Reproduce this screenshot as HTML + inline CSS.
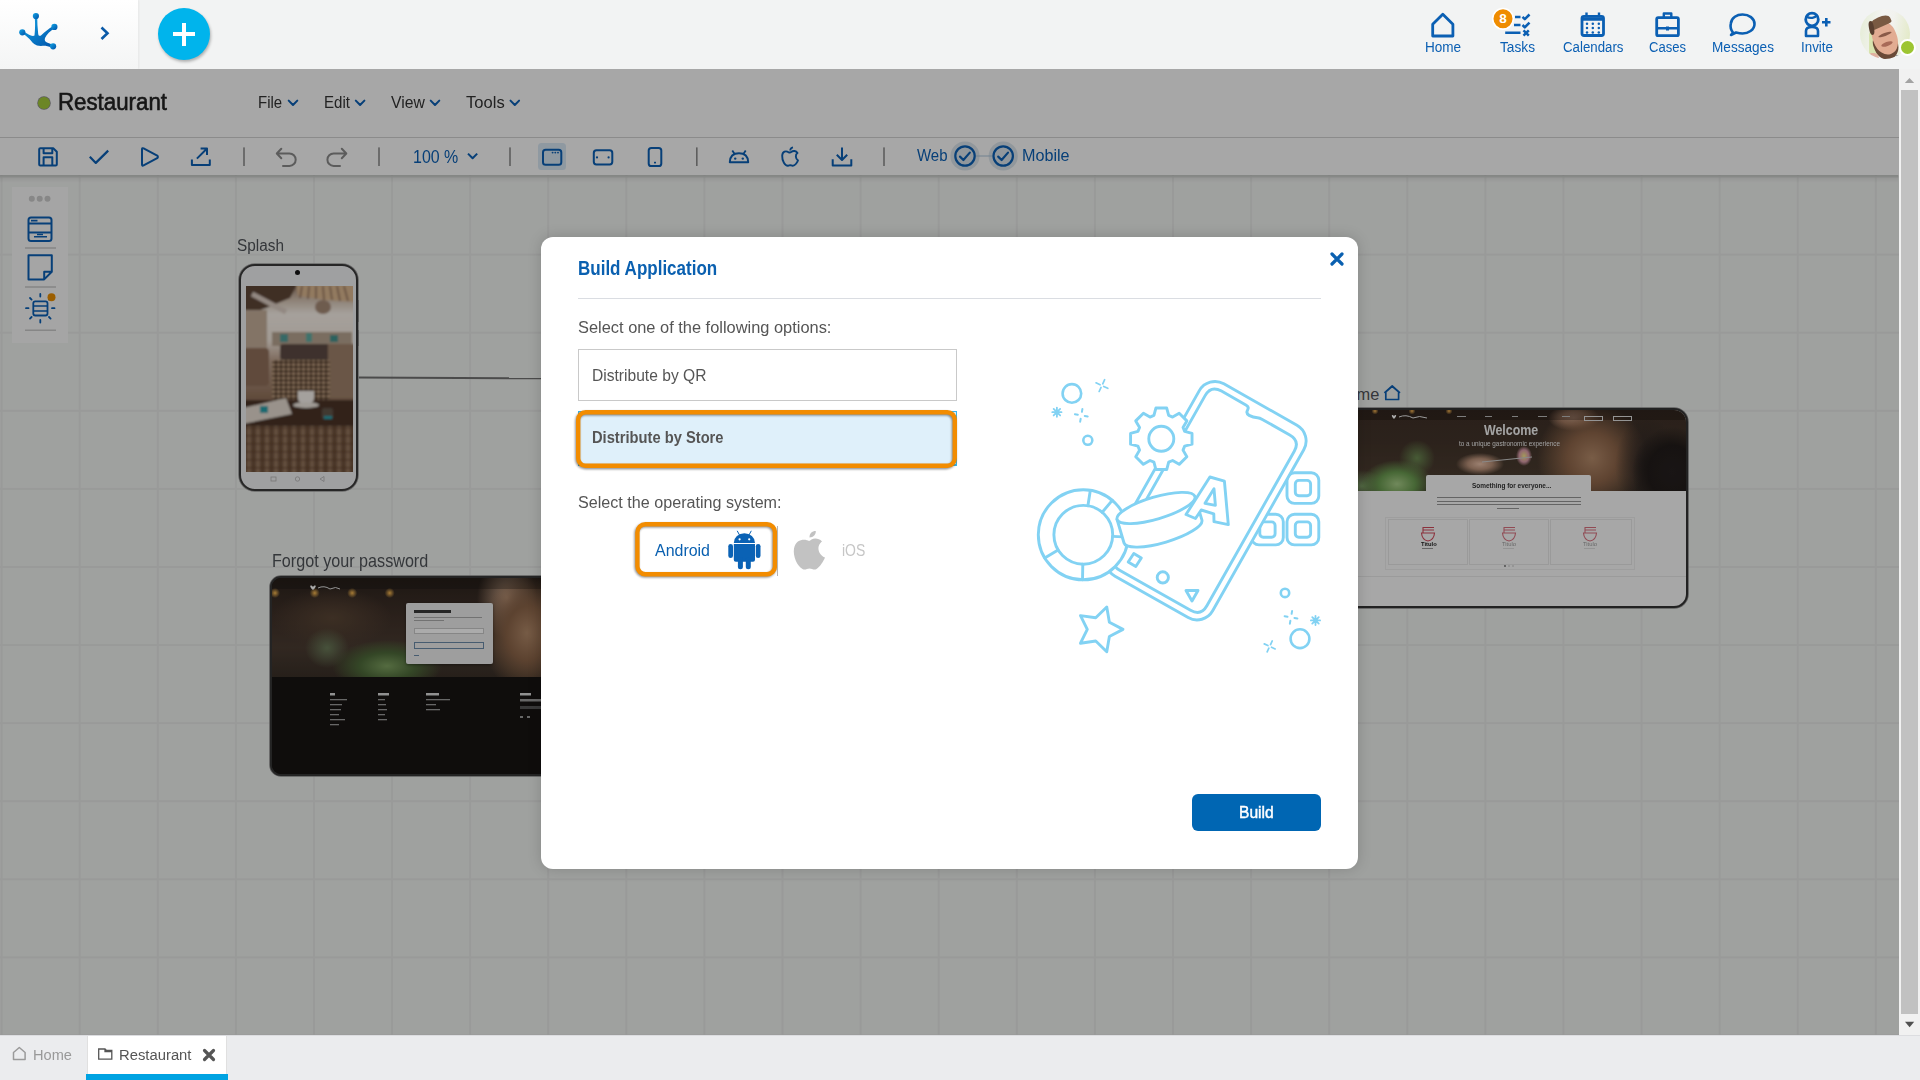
<!DOCTYPE html>
<html><head><meta charset="utf-8"><title>Build Application</title>
<style>
*{box-sizing:border-box}
html,body{margin:0;padding:0}
body{width:1920px;height:1080px;overflow:hidden;position:relative;background:#f2f3f3;font-family:"Liberation Sans",sans-serif;color:#333}
.t{position:absolute;white-space:nowrap;line-height:1}
.a{position:absolute}
svg{position:absolute;overflow:visible}
#hdr{position:absolute;left:0;top:0;width:1920px;height:69px;background:#f2f3f3}
#logo{position:absolute;left:0;top:0;width:138px;height:69px;background:linear-gradient(#ffffff,#f4f5f5);box-shadow:1px 0 2px rgba(0,0,0,0.05)}
#plus{position:absolute;left:158px;top:8px;width:52px;height:52px;border-radius:50%;background:#00b4ec;box-shadow:1px 2px 3px rgba(0,0,0,0.28)}
#main{position:absolute;left:0;top:69px;width:1899px;height:966px;background:#f2f3f2;overflow:hidden;z-index:0}
#tbar{position:absolute;left:0;top:0;width:1899px;height:69px;background:#f9f9f9;border-bottom:1px solid #d0d0d0}
#tools{position:absolute;left:0;top:69px;width:1899px;height:37px;background:#f9f9f9;}
#canvas{position:absolute;left:0;top:106px;width:1899px;height:860px;background-color:#eef0ee;
 background-image:linear-gradient(to right,#e4e6e4 2px,transparent 2px),linear-gradient(to bottom,#e4e6e4 2px,transparent 2px);
 background-size:78.1px 78.1px;background-position:0.6px 0.5px}
#overlay{position:absolute;left:0;top:69px;width:1899px;height:966px;background:rgba(0,0,0,0.33)}
#modal{position:absolute;left:541px;top:237px;width:817px;height:632px;background:#fff;border-radius:12px;box-shadow:0 0 14px rgba(0,0,0,0.17)}
#sb{position:absolute;left:1899px;top:69px;width:21px;height:966px;background:#f1f1f1}
#tabs{position:absolute;left:0;top:1035px;width:1920px;height:45px;background:#ebecee;border-top:1px solid #dcdde0}
</style></head>
<body>
<div id="hdr"><div id="logo"></div><div id="plus"></div></div>
<svg style="left:0px;top:0px" width="138" height="69" viewBox="0 0 138 69" >
<defs><linearGradient id="lg" x1="0" y1="0" x2="1" y2="1"><stop offset="0" stop-color="#12a6e6"/><stop offset="1" stop-color="#0050a8"/></linearGradient></defs>
<g fill="url(#lg)" stroke="none">
<path d="M34.6 16.5 C35.5 24 35 31 34.5 35.5 C33 36.5 30 35.5 27 33.5 C25.5 32.5 24 32 22.8 31 L21.8 33.6 C24 34.5 27 36.5 29.5 39 C31.5 41.5 33.5 44 37 45.5 C40.5 46.5 44 45.5 46.5 46 C48.5 46.3 50.5 47 52.2 47.8 L53.6 45 C51.5 44.2 49 43.5 47 42.5 C45 41.5 44.3 40 45 38 C46.5 34.5 50 31 55.4 28 L53.6 25.9 C48.5 28.5 44.5 32 41.5 35 C40 36.5 38.5 36 38.2 34 C37.5 28 37.2 22 37.2 16.3 Z"/>
<circle cx="35.9" cy="16" r="3.1"/>
<circle cx="22.3" cy="32.3" r="3.1"/>
<circle cx="54.4" cy="26.9" r="3.1"/>
<circle cx="53.1" cy="46.3" r="3.1"/>
</g>
<path d="M101.5 27.5 L107.5 33.2 L101.5 39" fill="none" stroke="#0b5aa8" stroke-width="2.6"/>
</svg>
<div class="a" style="left:173px;top:31.8px;width:22px;height:4.4px;background:#fff"></div>
<div class="a" style="left:181.8px;top:22.5px;width:4.4px;height:23.5px;background:#fff"></div>
<svg style="left:1400px;top:0px" width="440" height="69" viewBox="1400 0 440 69" >
<g fill="none" stroke="#0b5fb3" stroke-width="2.8" stroke-linejoin="round">
<path d="M1432.7 36 V24.2 L1442.8 14.2 L1452.9 24.2 V36 Z"/>
<path d="M1515 16.9 H1520.5 M1522.5 16.9 L1524.8 19.2 L1529.5 14.5 M1514 25 H1520.5 M1522.5 25 L1524.8 27.3 L1529.5 22.6 M1505.2 32.8 H1520.5 M1523.5 30.3 L1528.8 35.6 M1528.8 30.3 L1523.5 35.6" stroke-width="2.5" stroke-linecap="butt"/>
<rect x="1582" y="16.3" width="21.5" height="19.2" rx="2"/>
<path d="M1582 19 H1603.5" stroke-width="3.5"/>
<path d="M1586.5 12.5 V17 M1599 12.5 V17" stroke-width="2.4"/>
<rect x="1656.7" y="17.7" width="21.7" height="18" rx="1.5"/>
<path d="M1663.8 17.5 V13.5 H1671.3 V17.5 M1656.7 28.3 H1678.4" stroke-width="2.4"/>
<path d="M1733 32.5 C1730 29 1730.5 25 1730.8 23.5 C1731.5 17.5 1737 14.5 1742.5 14.5 C1749 14.5 1754.5 18.3 1754.5 24 C1754.5 30 1748 33.5 1742.5 33.5 C1740 33.5 1738 33 1736 32.5 L1731 35 Z" stroke-width="2.6"/>
<circle cx="1812" cy="19.5" r="6.3" stroke-width="2.8"/>
<path d="M1806.5 16.5 C1810 19 1815 18 1817.5 15" stroke-width="2.2"/>
<path d="M1806 36 V31 C1806 28 1808.5 27 1812 27 C1815.5 27 1818 28 1818 31 V36 Z" stroke-width="2.6"/>
<path d="M1826.3 18 V26.5 M1822 22.3 H1830.5" stroke-width="2.6"/>
</g>
<g fill="#0b5fb3">
<circle cx="1587" cy="23.8" r="1.25"/><circle cx="1592.8" cy="23.8" r="1.25"/><circle cx="1598.8" cy="23.8" r="1.25"/>
<circle cx="1587" cy="28.1" r="1.25"/><circle cx="1592.8" cy="28.1" r="1.25"/><circle cx="1598.8" cy="28.1" r="1.25"/>
<circle cx="1587" cy="32.5" r="1.25"/><circle cx="1592.8" cy="32.5" r="1.25"/><circle cx="1598.8" cy="32.5" r="1.25"/>
<rect x="1666" y="26.5" width="3" height="4"/>
</g>
<circle cx="1503" cy="18.8" r="10.3" fill="#ef8c00" stroke="#ffffff" stroke-width="1.6"/>
</svg>
<div class="t" style="left:1499.20px;top:11.81px;font-size:13.52px;color:#fff;font-weight:bold;">8</div>
<div class="t" style="left:1424.80px;top:39.52px;font-size:14.68px;transform:scaleX(0.9236);transform-origin:0 0;color:#0b5fb3;">Home</div>
<div class="t" style="left:1500.00px;top:39.52px;font-size:14.68px;transform:scaleX(0.9331);transform-origin:0 0;color:#0b5fb3;">Tasks</div>
<div class="t" style="left:1562.50px;top:39.52px;font-size:14.68px;transform:scaleX(0.9038);transform-origin:0 0;color:#0b5fb3;">Calendars</div>
<div class="t" style="left:1649.30px;top:39.52px;font-size:14.68px;transform:scaleX(0.8890);transform-origin:0 0;color:#0b5fb3;">Cases</div>
<div class="t" style="left:1711.50px;top:39.52px;font-size:14.68px;transform:scaleX(0.9262);transform-origin:0 0;color:#0b5fb3;">Messages</div>
<div class="t" style="left:1801.00px;top:39.52px;font-size:14.68px;transform:scaleX(0.9121);transform-origin:0 0;color:#0b5fb3;">Invite</div>
<div class="a" style="left:1860px;top:9px;width:50px;height:50px;border-radius:50%;overflow:hidden;background:linear-gradient(100deg,#e4ecd4 0%,#f4f4f2 40%,#f2f2ee 60%,#e0e8c0 100%)">
<div class="a" style="left:0;top:0;width:50px;height:50px;filter:blur(0.6px)">
<div class="a" style="left:9px;top:22px;width:10px;height:26px;background:#d8e4b0;border-radius:4px"></div>
<div class="a" style="left:14px;top:22px;width:24px;height:29px;border-radius:40% 40% 50% 50%;background:#6a4a38;transform:rotate(-22deg)"></div>
<div class="a" style="left:13px;top:12px;width:24px;height:34px;border-radius:45% 45% 48% 48%;background:#e2ac92;transform:rotate(-22deg)"></div>
<div class="a" style="left:9px;top:8px;width:22px;height:10px;border-radius:60% 60% 20% 20%;background:#7a5a42;transform:rotate(-24deg)"></div><div class="a" style="left:9px;top:12px;width:5px;height:14px;border-radius:40%;background:#5a4030;transform:rotate(-10deg)"></div>
<div class="a" style="left:21px;top:33px;width:12px;height:4px;border-radius:50%;background:#a86a58;transform:rotate(-20deg)"></div><div class="a" style="left:18px;top:24px;width:14px;height:3px;border-radius:50%;background:#8a5a48;transform:rotate(-20deg)"></div>
<div class="a" style="left:7px;top:44px;width:12px;height:14px;border-radius:40%;background:#e0b0a0"></div>
<div class="a" style="left:20px;top:50px;width:26px;height:10px;background:#ece8e6"></div>
<div class="a" style="left:36px;top:46px;width:8px;height:8px;background:#9a9aa0"></div>
</div></div>
<div class="a" style="left:1898.5px;top:39.3px;width:17px;height:17px;border-radius:50%;background:#9dc532;border:2.6px solid #fff"></div>
<div id="main"><div id="tbar"></div><div id="tools"></div><div id="canvas"></div><div class="a" style="left:0;top:106px;width:1898px;height:8px;background:linear-gradient(rgba(0,0,0,0.16),rgba(0,0,0,0.05) 45%,rgba(0,0,0,0))"></div></div>
<div class="a" style="left:38.2px;top:97px;width:11.6px;height:11.6px;border-radius:50%;background:#a2c83a;box-shadow:0 0 0 0.7px #8a8a8a"></div>
<div class="t" style="left:58.00px;top:89.81px;font-size:23.98px;transform:scaleX(0.9294);transform-origin:0 0;color:#222;-webkit-text-stroke:0.6px #222;">Restaurant</div>
<div class="t" style="left:258.00px;top:94.32px;font-size:17.15px;transform:scaleX(0.8728);transform-origin:0 0;color:#333;">File</div>
<div class="t" style="left:323.60px;top:94.32px;font-size:17.15px;transform:scaleX(0.8788);transform-origin:0 0;color:#333;">Edit</div>
<div class="t" style="left:390.70px;top:94.32px;font-size:17.15px;transform:scaleX(0.9193);transform-origin:0 0;color:#333;">View</div>
<div class="t" style="left:465.80px;top:94.32px;font-size:17.15px;transform:scaleX(0.9663);transform-origin:0 0;color:#333;">Tools</div>
<svg style="left:0px;top:69px" width="1898" height="110" viewBox="0 69 1898 110" ><g fill="none" stroke="#0b5fb3" stroke-width="2" stroke-linecap="round" stroke-linejoin="round"><path d="M288.7 100.6 L293 105 L297.3 100.6"/><path d="M355.8 100.6 L360.1 105 L364.40000000000003 100.6"/><path d="M430.7 100.6 L435 105 L439.3 100.6"/><path d="M510.49999999999994 100.6 L514.8 105 L519.0999999999999 100.6"/></g><g fill="none" stroke="#0b5fb3" stroke-width="2" stroke-linejoin="round">
<path d="M39.2 149.3 Q39.2 148.2 40.3 148.2 H53.2 L56.8 151.8 V164.5 Q56.8 165.6 55.7 165.6 H40.3 Q39.2 165.6 39.2 164.5 Z"/>
<path d="M43.6 148.4 V153.3 H52.3 V148.4 M43.6 165.4 V157.2 H52.3 V165.4"/>
<path d="M89.8 156.8 L95.8 162.9 L108.2 150.6" stroke-width="2.2"/>
<path d="M142 149.2 Q142 147.6 143.6 148.4 L157.2 155.6 Q158.6 156.9 157.2 158.2 L143.6 165.4 Q142 166.2 142 164.6 Z"/>
<path d="M191.9 159.6 V164.9 H209.8 V159.6 M196.9 158.6 L206.8 148.7 M200.6 148.6 H207 V155"/>
<path d="M468 153.6 L472.6 158.2 L477.2 153.6"/>
<rect x="538" y="143" width="28" height="27" rx="3.5" fill="#d6e5f1" stroke="none"/>
<rect x="543" y="149.8" width="18.3" height="15" rx="2.6"/>
<rect x="593.8" y="150.3" width="18.5" height="14.1" rx="2.6"/>
<rect x="648.7" y="148" width="12.6" height="18" rx="2.6"/>
<path d="M729.8 162.3 Q730 153.3 739 153.3 Q748 153.3 748.2 162.3 Z"/>
<path d="M732.3 150.6 L734.6 154 M745.7 150.6 L743.4 154" stroke-width="1.8"/>
<path d="M788.5 152.2 C786 150.5 782.4 151.3 782.2 155.8 C782 161 785 166 788 165.8 C789 165.6 789.6 165.2 790.3 165.2 C791 165.2 791.6 165.7 792.6 165.8 C795 166 797.6 162 798 160.3 C795.5 159 795 154.5 797.5 153 C796 150.7 793.2 150.5 791.5 151.8 C790.5 152.6 789.5 152.8 788.5 152.2 Z" stroke-width="1.9"/>
<path d="M790.2 150.5 C790.3 148.8 791.5 147.6 793 147.4" stroke-width="1.8"/>
<path d="M842 147.6 V160 M836.8 154.8 L842 160 L847.2 154.8 M832.7 159.3 V165.6 H851.3 V159.3"/>
</g>
<g fill="#0b5fb3">
<circle cx="552.6" cy="152.6" r="0.95"/><circle cx="555.3" cy="152.6" r="0.95"/><circle cx="558" cy="152.6" r="0.95"/>
<circle cx="597" cy="157.4" r="1.1"/><circle cx="608.6" cy="157.4" r="1.1"/>
<rect x="654" y="161.8" width="2" height="1.6"/>
<circle cx="735.2" cy="158.6" r="1.2"/><circle cx="742.8" cy="158.6" r="1.2"/>
</g>
<g fill="#8c8c8c">
<rect x="243.2" y="147.4" width="1.6" height="18.6"/><rect x="378.2" y="147.4" width="1.6" height="18.6"/>
<rect x="509.2" y="147.4" width="1.6" height="18.6"/><rect x="696" y="147.4" width="1.6" height="18.6"/><rect x="883.2" y="147.4" width="1.6" height="18.6"/>
</g>
<g fill="none" stroke="#8a8a8a" stroke-width="2" stroke-linecap="round" stroke-linejoin="round">
<path d="M281.3 148.8 L276.8 153.5 L281.3 158.2 M277.3 153.5 H289.5 A6.2 6.2 0 0 1 289.5 165.9 H283"/>
<path d="M341.8 148.8 L346.3 153.5 L341.8 158.2 M345.8 153.5 H333.6 A6.2 6.2 0 0 0 333.6 165.9 H340"/>
</g>
<circle cx="965" cy="156" r="14.6" fill="#d8e2e9"/><circle cx="1003.2" cy="156" r="14.6" fill="#d8e2e9"/>
<path d="M975.5 156 H992.7" stroke="#a9c2d8" stroke-width="1"/>
<g fill="none" stroke="#0b5fb3" stroke-width="2.2" stroke-linecap="round" stroke-linejoin="round">
<circle cx="965" cy="156" r="9.7"/><circle cx="1003.2" cy="156" r="9.7"/>
<path d="M960 156.6 L963.4 160 L969.8 152.6 M998.2 156.6 L1001.6 160 L1008 152.6"/>
</g>
</svg>
<div class="t" style="left:412.50px;top:147.98px;font-size:18.02px;transform:scaleX(0.8866);transform-origin:0 0;color:#0b5fb3;">100 %</div>
<div class="t" style="left:916.60px;top:147.10px;font-size:17.30px;transform:scaleX(0.8672);transform-origin:0 0;color:#0b5fb3;">Web</div>
<div class="t" style="left:1021.60px;top:147.10px;font-size:17.30px;transform:scaleX(0.9345);transform-origin:0 0;color:#0b5fb3;">Mobile</div>
<div class="a" style="left:12px;top:187px;width:55.5px;height:155.5px;background:#f7f7f7"></div>
<svg style="left:0px;top:180px" width="80" height="170" viewBox="0 180 80 170" ><g fill="#c9c9c9"><circle cx="31.8" cy="198.8" r="3"/><circle cx="39.7" cy="198.8" r="3"/><circle cx="47.5" cy="198.8" r="3"/></g>
<g fill="none" stroke="#c8c8c8" stroke-width="1.5"><path d="M25 248 H56 M25 287 H56 M25 330.3 H56"/></g>
<g fill="none" stroke="#0b5fb3" stroke-width="2" stroke-linejoin="round">
<rect x="28.5" y="217.6" width="23" height="23.3" rx="2.5"/>
<path d="M28.5 223.5 H51.5 M28.5 232.5 H51.5"/>
<path d="M31 220.6 H37.5 M34 236.8 H47 M37 234.5 H43" stroke-width="1.6"/>
<path d="M28.5 255.2 H51.8 V271.8 L44.2 279.4 H28.5 Z M51.8 271.8 H44.2 V279.4"/>
<rect x="33.3" y="301.3" width="14.2" height="14.2" rx="2" stroke-width="1.8"/>
<path d="M33.3 306 H47.5 M33.3 311 H47.5" stroke-width="1.5"/>
<path d="M40.3 294 V296.5 M40.3 320 V322.5 M26 308.2 H28.5 M52 308.2 H54.5 M30 298 L31.6 299.6 M49 317 L50.6 318.6 M30 318.6 L31.6 317 M49 299.6 L50.6 298" stroke-width="1.8" stroke-linecap="round"/>
</g>
<circle cx="51.5" cy="297.2" r="4" fill="#e88c00"/>
</svg>
<div class="t" style="left:237.40px;top:236.50px;font-size:17.30px;transform:scaleX(0.8880);transform-origin:0 0;color:#4e5257;">Splash</div>
<svg style="left:300px;top:360px" width="260" height="30" viewBox="300 360 260 30" ><path d="M358.5 377.4 L541 378.3" stroke="#707070" stroke-width="2" fill="none"/></svg>
<div class="a" style="left:238.7px;top:263.8px;width:119px;height:227.4px;border-radius:16px;border:2.6px solid #3a3a3a;background:#eeeff1;box-shadow:0 0 0 0.8px #9a9a9a"></div>
<div class="a" style="left:357.6px;top:300px;width:1.6px;height:22px;background:#8a8a8a"></div>
<div class="a" style="left:357.6px;top:330px;width:1.6px;height:16px;background:#8a8a8a"></div>
<div class="a" style="left:295px;top:269.5px;width:5px;height:5px;border-radius:50%;background:#151515"></div>
<div class="a" style="left:246px;top:285.5px;width:106.5px;height:186.5px;overflow:hidden;background:#6e5646;filter:saturate(1.25)">
 <svg width="107" height="187" style="left:0;top:0"><defs><filter id="pb" x="-5%" y="-5%" width="110%" height="110%"><feGaussianBlur stdDeviation="0.9"/></filter>
 <pattern id="weave" width="5" height="4.5" patternUnits="userSpaceOnUse"><rect width="5" height="4.5" fill="#3e2c20"/><rect x="0.6" y="0.6" width="3.8" height="3" rx="1" fill="#c0a68c"/></pattern>
 <pattern id="wick" width="9" height="8" patternUnits="userSpaceOnUse"><rect width="9" height="8" fill="#6a5242"/><rect x="1" y="0" width="4" height="8" fill="#8e7662"/><rect x="0" y="5" width="9" height="1.5" fill="#55402f" opacity="0.6"/></pattern>
 <linearGradient id="bg" x1="0" y1="0" x2="0" y2="1"><stop offset="0" stop-color="#8a7262"/><stop offset="0.08" stop-color="#cbbcae"/><stop offset="0.16" stop-color="#f6f0ea"/><stop offset="0.30" stop-color="#efe6de"/><stop offset="0.40" stop-color="#b8a292"/><stop offset="0.6" stop-color="#8a705e"/><stop offset="1" stop-color="#6a5242"/></linearGradient></defs>
 <g filter="url(#pb)">
 <rect x="-3" y="-3" width="113" height="193" fill="url(#bg)"/>
 <path d="M-3 -3 H52 L44 12 L20 22 L-3 30 Z" fill="#5a463a"/>
 <path d="M6 8 L40 26" stroke="#d8ccc4" stroke-width="5"/>
 <path d="M50 -3 H110 V16 L80 14 L52 10 Z" fill="#d4b898"/>
 <path d="M56 0 L54 12 M63 0 L62 13 M70 0 L70 13 M77 0 L78 14 M84 0 L86 14 M91 0 L94 15 M98 0 L102 15" stroke="#8a7060" stroke-width="1.6"/>
 <ellipse cx="77" cy="21" rx="8" ry="7" fill="#a08a7a"/>
 <rect x="-3" y="24" width="24" height="70" fill="#bfae9e"/>
 <rect x="26" y="46" width="80" height="14" fill="#b4a494"/>
 <rect x="34" y="48" width="8" height="8" fill="#5e9a96"/><rect x="60" y="47" width="6" height="9" fill="#6aa8a0"/><rect x="84" y="49" width="8" height="7" fill="#4e8e8a"/>
 <rect x="-3" y="62" width="26" height="38" rx="4" fill="#8a705e"/>
 <rect x="34" y="58" width="60" height="16" rx="3" fill="#5a4c44"/>
 <rect x="82" y="58" width="28" height="54" fill="#9a8270"/>
 <rect x="26" y="74" width="58" height="54" rx="2" fill="url(#weave)"/>
 <rect x="-3" y="114" width="113" height="30" fill="#47342a"/>
 <path d="M-3 122 L40 112 L46 128 L-3 138 Z" fill="#e2dad2"/>
 <rect x="14" y="120" width="8" height="7" fill="#3a9aa2"/>
 <path d="M52 105 H68 V112 Q68 118 60 118 Q52 118 52 112 Z" fill="#f4f0ec"/>
 <ellipse cx="60" cy="119" rx="13" ry="3" fill="#ece6e0"/>
 <rect x="76" y="122" width="11" height="11" rx="2" fill="#5e544c"/><rect x="78" y="130" width="8" height="3" fill="#3a9aa2"/>
 <rect x="-3" y="140" width="113" height="50" fill="url(#wick)"/>
 </g></svg>
</div>
<svg style="left:260px;top:470px" width="80" height="20" viewBox="260 470 80 20"><g fill="none" stroke="#b0b0b0" stroke-width="0.8"><rect x="271" y="477" width="5" height="4"/><circle cx="297.5" cy="479" r="2.2"/><path d="M324 476.5 L320 479 L324 481.5 Z"/></g></svg>
<div class="t" style="left:271.80px;top:553.45px;font-size:17.59px;transform:scaleX(0.9190);transform-origin:0 0;color:#4e5257;">Forgot your password</div>
<div class="a" style="left:269.8px;top:575.8px;width:300px;height:200px;border-radius:11px;border:2.8px solid #363636;background:#181513;overflow:hidden;box-shadow:0 0 0 0.8px #8a8a8a">
 <div class="a" style="left:0;top:0;width:300px;height:99px;background:
   radial-gradient(ellipse 45px 60px at 255px 55px,#b08868 0%,#8a6448 45%,transparent 100%),
   radial-gradient(ellipse 30px 40px at 235px 20px,#caa488 0%,transparent 100%),
   radial-gradient(ellipse 55px 26px at 115px 88px,#7ea060 0%,#4e6a3a 50%,transparent 100%),
   radial-gradient(ellipse 22px 20px at 55px 70px,#6a7a58 0%,transparent 100%),
   radial-gradient(ellipse 60px 30px at 60px 40px,#5a4636 0%,transparent 100%),
   linear-gradient(180deg,#2e241e 0%,#3e3028 35%,#4a3c32 70%,#3a3028 100%)"></div>
 <div class="a" style="left:0;top:0;width:300px;height:11px;background:rgba(20,16,14,0.3)"></div>
 <div class="a" style="left:0;top:8px;width:300px;height:14px;background:radial-gradient(circle 5px at 3px 7px,#f8b850,transparent),radial-gradient(circle 5px at 42.7px 7px,#f8b850,transparent),radial-gradient(circle 5px at 80.2px 7px,#f8b850,transparent),radial-gradient(circle 5px at 117.7px 7px,#f8b850,transparent)"></div>
 <div class="a" style="left:134px;top:25px;width:87px;height:61px;background:#ececec;border-radius:2px;box-shadow:0 1px 3px rgba(0,0,0,0.4)"></div>
 <div class="a" style="left:142px;top:32px;width:37px;height:3.5px;background:#3a3a3a"></div>
 <div class="a" style="left:142px;top:39px;width:68px;height:1.2px;background:#aaa"></div>
 <div class="a" style="left:142px;top:42px;width:30px;height:1.2px;background:#aaa"></div>
 <div class="a" style="left:142px;top:50px;width:70px;height:6px;border:1px solid #c8c8c8;background:#fff"></div>
 <div class="a" style="left:142px;top:64px;width:70px;height:7px;border:1px solid #6a8aa8"></div>
 <div class="a" style="left:142px;top:77px;width:5px;height:1.5px;background:#6a8aa8"></div>
 <div class="a" style="left:0;top:99px;width:300px;height:100px;background:#171412"></div>
 <svg style="left:0;top:0" width="300" height="200"><g fill="#d8d8d8">
  <rect x="58" y="115" width="5" height="2.5"/><rect x="106" y="115" width="11" height="2.5"/><rect x="154" y="115" width="13" height="2.5"/><rect x="248" y="115" width="11" height="2.5"/>
 </g><g fill="#9a9a9a">
  <rect x="58" y="121" width="17" height="1.3"/><rect x="58" y="126" width="12" height="1.3"/><rect x="58" y="131" width="11" height="1.3"/><rect x="58" y="136" width="9" height="1.3"/><rect x="58" y="141" width="15" height="1.3"/><rect x="58" y="146" width="9" height="1.3"/>
  <rect x="106" y="121" width="7" height="1.3"/><rect x="106" y="126" width="8" height="1.3"/><rect x="106" y="131" width="9" height="1.3"/><rect x="106" y="136" width="7" height="1.3"/><rect x="106" y="141" width="9" height="1.3"/>
  <rect x="154" y="121" width="24" height="1.3"/><rect x="154" y="126" width="10" height="1.3"/><rect x="154" y="131" width="14" height="1.3"/>
  <rect x="248" y="121" width="22" height="2.5"/><rect x="248" y="138" width="3" height="2"/><rect x="255" y="138" width="3" height="2"/>
 </g><rect x="248" y="128" width="22" height="3" fill="#555"/>
 <path d="M41 9 C43 6 46 8 41 12 C36 8 39 6 41 9 Z" fill="#fff"/><path d="M46 10 Q52 7 58 11 Q64 8 68 11" stroke="#ddd" stroke-width="1" fill="none"/>
 </svg>
</div>
<div class="t" style="left:1335.50px;top:385.64px;font-size:16.42px;color:#4e5257;">Home</div>
<svg style="left:1380px;top:380px" width="30" height="26" viewBox="1380 380 30 26" ><path d="M1385.8 399.5 V391.8 L1392.2 386.3 L1398.6 391.8 V399.5 Z M1384.4 392.8 L1392.2 386 L1400 392.8" fill="none" stroke="#0b5fb3" stroke-width="1.7" stroke-linejoin="round"/></svg>
<div class="a" style="left:1200px;top:407.5px;width:488px;height:200px;border-radius:14px;border:2.8px solid #333;background:#fafafa;overflow:hidden;box-shadow:0 0 0 0.8px #8a8a8a">
 <div class="a" style="left:0;top:0;width:486px;height:81.5px;background:
   radial-gradient(ellipse 40px 45px at 470px 62px,#262020 0%,#221c1a 60%,transparent 100%),
   radial-gradient(ellipse 32px 48px at 445px 55px,#2e2624 0%,transparent 100%),
   radial-gradient(ellipse 55px 55px at 390px 48px,#b48a6a 0%,#8e664a 45%,transparent 100%),
   radial-gradient(ellipse 26px 13px at 372px 8px,#d8b09a 0%,#a88068 50%,transparent 100%),
   radial-gradient(ellipse 24px 11px at 278px 54px,#e8c0a8 0%,#b89078 50%,transparent 100%),
   radial-gradient(ellipse 8px 10px at 322px 46px,#f4e488 0%,#d89aa8 60%,transparent 100%),
   radial-gradient(ellipse 36px 24px at 195px 74px,#a8cc88 0%,#6a9a50 50%,transparent 100%),
   radial-gradient(ellipse 22px 16px at 160px 76px,#7a9a64 0%,transparent 100%),
   radial-gradient(ellipse 18px 18px at 215px 48px,#6a8850 0%,transparent 100%),
   linear-gradient(180deg,#3e3028 0%,#42342a 40%,#4a3c30 80%,#3a3028 100%)"></div>
 <svg style="left:0;top:0" width="486" height="82"><path d="M280 52 L330 47" stroke="#ccc" stroke-width="1"/></svg>
 <div class="a" style="left:0;top:0;width:486px;height:10px;background:rgba(20,14,10,0.3)"></div>
 <div class="a" style="left:160px;top:-2px;width:330px;height:6px;background:radial-gradient(circle 3.5px at 13px 3px,#f0b050,transparent),radial-gradient(circle 3.5px at 50px 3px,#f0b050,transparent),radial-gradient(circle 3.5px at 87px 3px,#f0b050,transparent)"></div>
 <svg style="left:0;top:0" width="486" height="20"><path d="M192 6 C193.5 4 196 5 192 9 C188 5 190.5 4 192 6 Z" fill="#fff"/><path d="M197 7 Q204 4 211 8 Q217 5 225 8" stroke="#e8e8e8" stroke-width="1" fill="none"/>
 <g fill="#bbb"><rect x="255" y="6" width="9" height="1"/><rect x="283" y="6" width="7" height="1"/><rect x="310" y="6" width="6" height="1"/><rect x="336" y="6" width="9" height="1"/><rect x="360" y="6" width="8" height="1"/></g></svg>
 <div class="a" style="left:382px;top:6px;width:19px;height:5px;border:0.8px solid #ddd"></div>
 <div class="a" style="left:411px;top:6px;width:19px;height:5px;border:0.8px solid #ddd"></div>
 <div class="a" style="left:224px;top:65px;width:165px;height:17px;background:#fafafa;border-radius:2px 2px 0 0"></div>
 <div class="a" style="left:183px;top:107px;width:250px;height:53px;border:1px solid #ececec"></div>
 <div class="a" style="left:186px;top:109px;width:80px;height:46px;border:1px solid #e6e6e6"></div>
 <div class="a" style="left:267px;top:109px;width:80px;height:46px;border:1px solid #e6e6e6"></div>
 <div class="a" style="left:348px;top:109px;width:82px;height:46px;border:1px solid #e6e6e6"></div>
 <div class="a" style="left:0;top:166px;width:486px;height:1px;background:#e8e8e8"></div>
</div>
<div class="t" style="left:1483.50px;top:423.74px;font-size:13.95px;transform:scaleX(0.8894);transform-origin:0 0;color:#f4f4f4;font-weight:bold;">Welcome</div>
<div class="t" style="left:1458.50px;top:441.39px;font-size:6.83px;transform:scaleX(0.9331);transform-origin:0 0;color:#ececec;">to a unique gastronomic experience</div>
<div class="t" style="left:1471.50px;top:481.62px;font-size:7.27px;transform:scaleX(0.8893);transform-origin:0 0;color:#333;font-weight:bold;">Something for everyone...</div>
<div class="a" style="left:1437px;top:496.8px;width:144px;height:8px;background:repeating-linear-gradient(180deg,#6a6a6a 0 1px,transparent 1px 3.7px);opacity:0.7"></div><div class="a" style="left:1497px;top:507.8px;width:22px;height:1px;background:#6a6a6a;opacity:0.7"></div>
<svg style="left:1410px;top:520px" width="230" height="50" viewBox="1410 520 230 50" ><g fill="none" stroke="#d04a5a" stroke-width="1.1"><path d="M1421.5 533 H1434.5 Q1434 540 1428 541 Q1422 540 1421.5 533 Z M1422.5 527.5 H1434 M1422.5 530 H1434 M1423 527.5 V533"/></g><g fill="none" stroke="#d8707e" stroke-width="1.1"><path d="M1502.5 533 H1515.5 Q1515 540 1509 541 Q1503 540 1502.5 533 Z M1503.5 527.5 H1515 M1503.5 530 H1515 M1504 527.5 V533"/><path d="M1583.5 533 H1596.5 Q1596 540 1590 541 Q1584 540 1583.5 533 Z M1584.5 527.5 H1596 M1584.5 530 H1596 M1585 527.5 V533"/></g><circle cx="1505" cy="566" r="0.9" fill="#666"/><circle cx="1509" cy="566" r="0.8" fill="#bbb"/><circle cx="1513" cy="566" r="0.8" fill="#bbb"/></svg>
<div class="t" style="left:1421.00px;top:540.69px;font-size:6.25px;transform:scaleX(0.9295);transform-origin:0 0;color:#222;font-weight:bold;">Titulo</div>
<div class="t" style="left:1502.00px;top:540.69px;font-size:6.25px;transform:scaleX(0.9295);transform-origin:0 0;color:#999;">Titulo</div>
<div class="t" style="left:1583.00px;top:540.69px;font-size:6.25px;transform:scaleX(0.9295);transform-origin:0 0;color:#999;">Titulo</div>
<div class="a" style="left:1422px;top:548.3px;width:11px;height:1px;background:#999"></div><div class="a" style="left:1503px;top:548.3px;width:11px;height:1px;background:#ddd"></div><div class="a" style="left:1584px;top:548.3px;width:11px;height:1px;background:#ddd"></div>
<div id="overlay"></div>
<div id="modal"></div>
<div class="t" style="left:578.00px;top:258.23px;font-size:20.20px;transform:scaleX(0.8424);transform-origin:0 0;color:#0a60b0;font-weight:bold;">Build Application</div>
<div class="a" style="left:578px;top:298px;width:743px;height:1px;background:#dadde2"></div>
<svg style="left:1320px;top:245px" width="30" height="30" viewBox="1320 245 30 30" ><path d="M1332 254 L1342 264 M1342 254 L1332 264" stroke="#0a60b0" stroke-width="3.2" stroke-linecap="round"/></svg>
<div class="t" style="left:577.80px;top:320.19px;font-size:16.72px;transform:scaleX(0.9817);transform-origin:0 0;color:#555;">Select one of the following options:</div>
<div class="a" style="left:578px;top:349px;width:379px;height:52px;border:1px solid #c9c9c9;background:#fff"></div>
<div class="t" style="left:591.70px;top:367.10px;font-size:17.30px;transform:scaleX(0.9025);transform-origin:0 0;color:#555;">Distribute by QR</div>
<div class="a" style="left:578px;top:411px;width:379px;height:55px;background:#dff0fa;border:1px solid #3bb5e8;border-bottom-width:2px"></div>
<svg style="left:560px;top:400px" width="420" height="190" viewBox="560 400 420 190" ><defs><filter id="sh" x="-10%" y="-10%" width="120%" height="120%"><feGaussianBlur stdDeviation="0.8"/></filter></defs><g fill="none"><rect x="578.2" y="412.2" width="376.6" height="53.6" rx="7.5" stroke="rgba(0,0,0,0.45)" stroke-width="4.4" transform="translate(-0.8 1.2)" filter="url(#sh)"/><rect x="578.2" y="412.2" width="376.6" height="53.6" rx="7.5" stroke="#f28c00" stroke-width="4.4"/><rect x="637.4" y="524.2" width="137.6" height="50" rx="8" stroke="rgba(0,0,0,0.45)" stroke-width="4.4" transform="translate(-0.8 1.2)" filter="url(#sh)"/><rect x="637.4" y="524.2" width="137.6" height="50" rx="8" stroke="#f28c00" stroke-width="4.4"/></g></svg>
<div class="t" style="left:591.70px;top:429.77px;font-size:16.86px;transform:scaleX(0.8719);transform-origin:0 0;color:#555;font-weight:bold;">Distribute by Store</div>
<div class="t" style="left:577.90px;top:493.84px;font-size:16.42px;transform:scaleX(0.9832);transform-origin:0 0;color:#555;">Select the operating system:</div>
<div class="a" style="left:777.3px;top:526px;width:1px;height:50px;background:#b4b4b4"></div>
<div class="t" style="left:655.00px;top:542.22px;font-size:17.15px;transform:scaleX(0.9309);transform-origin:0 0;color:#0a60b0;">Android</div>
<div class="t" style="left:841.70px;top:542.22px;font-size:17.15px;transform:scaleX(0.8159);transform-origin:0 0;color:#c6c6c6;">iOS</div>
<svg style="left:720px;top:525px" width="120" height="50" viewBox="720 525 120 50" >
<g fill="#0a62b5">
<path d="M733.8 542.9 A10.6 9.6 0 0 1 755 542.9 Z"/>
<path d="M733.8 543.9 H755 V559.7 Q755 561.7 753 561.7 H735.8 Q733.8 561.7 733.8 559.7 Z"/>
<rect x="728.3" y="543.9" width="4.7" height="14.2" rx="2.35"/>
<rect x="755.8" y="543.9" width="4.7" height="14.2" rx="2.35"/>
<rect x="737.9" y="557" width="5" height="12.2" rx="2.5"/>
<rect x="745.8" y="557" width="5" height="12.2" rx="2.5"/>
</g>
<path d="M737.2 530.8 L739.6 535.2 M751.3 530.8 L748.9 535.2" stroke="#0a62b5" stroke-width="1"/>
<circle cx="739.6" cy="539.3" r="1.1" fill="#fff"/><circle cx="749.2" cy="539.3" r="1.1" fill="#fff"/>
<g fill="#c2c2c2">
<path d="M809 541 C806 539 796 538 794 548.5 C792.8 556 797 566 802.5 569 C805 570.5 807 568.5 809.5 568.5 C812 568.5 814 570.5 816.5 569 C820 567 823.5 561 825 557.5 C820 555.5 818 551 818.5 547 C819 544 821 542.5 822 541.5 C819 538 814 538 811.5 539.5 C810.5 540.2 809.8 540.8 809 541 Z"/>
<path d="M809.5 537.5 C809.3 533.5 812 531 815.8 531 C816 534.5 813.5 537.5 809.5 537.5 Z"/>
</g></svg>
<svg style="left:1020px;top:360px" width="320" height="310" viewBox="1020 360 320 310" ><g fill="#fff" stroke="#82d2f3" stroke-width="2.9" stroke-linejoin="round" stroke-linecap="round"><rect x="1287" y="472.8" width="31.8" height="30.6" rx="7.5"/><rect x="1295.3" y="480.40000000000003" width="15.3" height="15.3" rx="3.5"/><rect x="1287" y="514.3" width="31.8" height="30.6" rx="7.5"/><rect x="1295.3" y="521.9" width="15.3" height="15.3" rx="3.5"/><rect x="1251.5" y="514.3" width="31.8" height="30.6" rx="7.5"/><rect x="1259.8" y="521.9" width="15.3" height="15.3" rx="3.5"/><g transform="translate(1206 500.7) rotate(29.5)"><rect x="-60" y="-110.5" width="120" height="221" rx="18"/><path d="M-52.5 -91 Q-52.5 -103 -40.5 -103 H-12 Q-8.5 -103 -8.5 -99.5 Q-8.5 -95.5 -4.5 -95.5 Q0 -95.5 4 -97.5 Q6 -98.5 9 -98.5 H40.5 Q52.5 -98.5 52.5 -86.5 V91 Q52.5 103 40.5 103 H-40.5 Q-52.5 103 -52.5 91 Z"/></g><path d="M1153.93,415.43 L1155.88,408.07 L1166.72,408.07 L1168.67,415.43 L1172.61,417.07 L1179.20,413.24 L1186.86,420.90 L1183.03,427.49 L1184.67,431.43 L1192.03,433.38 L1192.03,444.22 L1184.67,446.17 L1183.03,450.11 L1186.86,456.70 L1179.20,464.36 L1172.61,460.53 L1168.67,462.17 L1166.72,469.53 L1155.88,469.53 L1153.93,462.17 L1149.99,460.53 L1143.40,464.36 L1135.74,456.70 L1139.57,450.11 L1137.93,446.17 L1130.57,444.22 L1130.57,433.38 L1137.93,431.43 L1139.57,427.49 L1135.74,420.90 L1143.40,413.24 L1149.99,417.07 Z"/><circle cx="1161.3" cy="438.8" r="12.5"/><circle cx="1083.3" cy="534.8" r="45"/><circle cx="1083.3" cy="534.8" r="29.4"/><path d="M1087.90 505.76 L1090.34 490.35"/><path d="M1102.20 512.28 L1112.23 500.33"/><path d="M1112.66 536.34 L1128.24 537.16"/><path d="M1082.79 564.20 L1082.51 579.79"/><path d="M1058.10 549.94 L1044.73 557.98"/><g transform="translate(1156 508) rotate(-16.5)"><path d="M-40.6 0 L-40.6 24.5 A40.6 11 0 0 0 40.6 24.5 L40.6 0 Z"/><ellipse cx="0" cy="0" rx="40.6" ry="11"/></g><path d="M1186 514.5 L1209.9 477 L1224.4 481.1 L1228.3 524.6 L1214 521.6 L1213.8 513.8 L1201.2 510 L1195.5 518.5 Z"/><path d="M1205 503.3 L1214 488.8 L1215.4 505.4 Z"/><path d="M1128.2 562 L1133.8 553.5 L1141.3 558 L1135.8 566.5 Z"/><circle cx="1162.8" cy="577.4" r="5.6"/><path d="M1186 590.5 H1198 L1192 601 Z"/><path d="M1123.00,629.40 L1109.37,636.57 L1106.76,651.75 L1095.73,641.00 L1080.49,643.21 L1087.30,629.40 L1080.49,615.59 L1095.73,617.80 L1106.76,607.05 L1109.37,622.23 Z"/></g><g fill="none" stroke="#82d2f3" stroke-width="2.6" stroke-linecap="round"><circle cx="1071.9" cy="393.4" r="9.3"/><circle cx="1087.8" cy="440.3" r="4.5"/><circle cx="1285" cy="592.9" r="4.2"/><circle cx="1300" cy="638.7" r="9.4"/><path d="M1103.71 386.45 L1107.79 388.35 M1101.05 387.41 L1099.15 391.49 M1100.09 384.75 L1096.01 382.85 M1102.75 383.79 L1104.65 379.71 " stroke-width="1.7"/><path d="M1271.51 647.25 L1275.14 648.94 M1268.85 648.21 L1267.16 651.84 M1267.89 645.55 L1264.26 643.86 M1270.55 644.59 L1272.24 640.96 " stroke-width="1.7"/><path d="M1084.75 415.91 L1087.70 416.43 M1080.69 418.75 L1080.17 421.70 M1077.85 414.69 L1074.90 414.17 M1081.91 411.85 L1082.43 408.90 " stroke-width="2"/><path d="M1294.45 617.91 L1297.40 618.43 M1290.39 620.75 L1289.87 623.70 M1287.55 616.69 L1284.60 616.17 M1291.61 613.85 L1292.13 610.90 " stroke-width="2"/><path d="M1052.30 412.20 L1061.50 412.20 M1053.65 408.95 L1060.15 415.45 M1056.90 407.60 L1056.90 416.80 M1060.15 408.95 L1053.65 415.45 " stroke-width="1.8"/><path d="M1310.90 620.40 L1320.10 620.40 M1312.25 617.15 L1318.75 623.65 M1315.50 615.80 L1315.50 625.00 M1318.75 617.15 L1312.25 623.65 " stroke-width="1.8"/></g></svg>
<div class="a" style="left:1192px;top:794px;width:129px;height:37px;background:#0066b3;border-radius:6px"></div>
<div class="t" style="left:1239.30px;top:803.72px;font-size:17.15px;transform:scaleX(0.9119);transform-origin:0 0;color:#fff;-webkit-text-stroke:0.45px #fff;">Build</div>
<div id="sb"></div>
<div class="a" style="left:1901px;top:90px;width:16.8px;height:924px;background:#c1c1c1"></div>
<svg style="left:1898px;top:69px" width="22" height="966" viewBox="1898 69 22 966" ><path d="M1904.8 83.1 L1909.5 77.9 L1914.2 83.1 Z" fill="#a3a3a3"/><path d="M1905 1021.7 L1914.2 1021.7 L1909.6 1027.2 Z" fill="#505050"/></svg>
<div id="tabs"></div>
<div class="a" style="left:86.9px;top:1036px;width:140.1px;height:44px;background:#fff;border-left:1px solid #e0e0e0;border-right:1px solid #e0e0e0"></div>
<div class="a" style="left:86px;top:1074px;width:142px;height:6px;background:#00a3e2"></div>
<svg style="left:0px;top:1040px" width="230" height="30" viewBox="0 1040 230 30" ><path d="M13.5 1059.5 V1052.5 L19.3 1047.5 L25.1 1052.5 V1059.5 Z" fill="none" stroke="#9a9a9a" stroke-width="1.5" stroke-linejoin="round"/>
<path d="M98.7 1049 H105 L106.5 1050.5 H111.8 V1059.2 H98.7 Z M105 1049 V1051.5 H111.8" fill="none" stroke="#555" stroke-width="1.3"/>
<path d="M204.5 1050.5 L213.5 1059.5 M213.5 1050.5 L204.5 1059.5" stroke="#555" stroke-width="3.2" stroke-linecap="round"/></svg>
<div class="t" style="left:33.00px;top:1046.83px;font-size:15.26px;transform:scaleX(0.9571);transform-origin:0 0;color:#999;">Home</div>
<div class="t" style="left:119.40px;top:1046.83px;font-size:15.26px;transform:scaleX(0.9715);transform-origin:0 0;color:#555;">Restaurant</div>
</body></html>
